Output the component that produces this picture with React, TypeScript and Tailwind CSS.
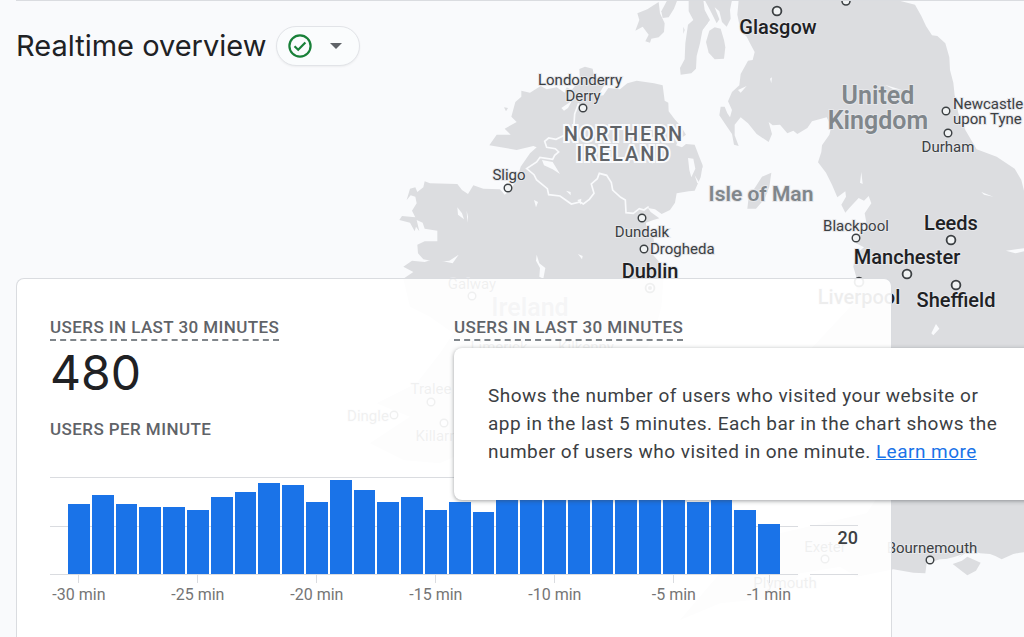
type Place = {
    name: string;
    x: number;
    y: number;
    kind: 'city' | 'town' | 'region' | 'country' | 'island';
    anchor?: 'start' | 'middle';
    pin?: [number, number];
};

const places: Place[] = [
    { name: 'Glasgow', x: 778, y: 34, kind: 'city', pin: [777, 11] },
    { name: 'Londonderry', x: 580, y: 85, kind: 'town' },
    { name: 'Derry', x: 583, y: 101, kind: 'town', pin: [583, 108] },
    { name: 'Sligo', x: 509, y: 180, kind: 'town', pin: [508, 188] },
    { name: 'Dundalk', x: 642, y: 237, kind: 'town', pin: [642, 218] },
    { name: 'Drogheda', x: 650, y: 254, kind: 'town', anchor: 'start', pin: [644, 249] },
    { name: 'Dublin', x: 650, y: 278, kind: 'city', pin: [650, 288] },
    { name: 'NORTHERN', x: 624, y: 141, kind: 'region' },
    { name: 'IRELAND', x: 624, y: 161, kind: 'region' },
    { name: 'United', x: 878, y: 104, kind: 'country' },
    { name: 'Kingdom', x: 878, y: 129, kind: 'country' },
    { name: 'Ireland', x: 530, y: 316, kind: 'country' },
    { name: 'Isle of Man', x: 761, y: 201, kind: 'island' },
    { name: 'Newcastle', x: 953, y: 109, kind: 'town', anchor: 'start', pin: [946, 111] },
    { name: 'upon Tyne', x: 953, y: 124, kind: 'town', anchor: 'start' },
    { name: 'Durham', x: 948, y: 152, kind: 'town', pin: [948, 133] },
    { name: 'Blackpool', x: 856, y: 231, kind: 'town', pin: [856, 238] },
    { name: 'Leeds', x: 951, y: 230, kind: 'city', pin: [951, 240] },
    { name: 'Manchester', x: 907, y: 264, kind: 'city', pin: [907, 274] },
    { name: 'Liverpool', x: 859, y: 304, kind: 'city', pin: [859, 282] },
    { name: 'Sheffield', x: 956, y: 307, kind: 'city', pin: [956, 285] },
    { name: 'Galway', x: 472, y: 289, kind: 'town', pin: [472, 296] },
    { name: 'Limerick', x: 499, y: 352, kind: 'town' },
    { name: 'Kilkenny', x: 586, y: 352, kind: 'town' },
    { name: 'Tralee', x: 431, y: 394, kind: 'town', pin: [431, 402] },
    { name: 'Dingle', x: 368, y: 421, kind: 'town', pin: [394, 415] },
    { name: 'Killarney', x: 444, y: 441, kind: 'town', pin: [444, 423] },
    { name: 'Exeter', x: 825, y: 552, kind: 'town', pin: [825, 559] },
    { name: 'Plymouth', x: 785, y: 588, kind: 'town' },
    { name: 'Bournemouth', x: 932, y: 553, kind: 'town', pin: [930, 560] },
];

const labelStyles = {
    city: 'fill-[#202124] text-[20px] font-medium',
    town: 'fill-[#3c4043] text-[15px]',
    region: 'fill-[#5f6368] text-[20px] font-medium tracking-widest',
    country: 'fill-[#80868b] text-[25px] font-semibold',
    island: 'fill-[#80868b] text-[21px] font-semibold',
};

// heights in px, 49px is 20 users
const bars = [
    70, 79, 70, 67, 67, 64, 77, 82, 91, 89, 72, 94, 84, 72, 77, 64, 72, 62, 80, 83, 78, 81, 85, 79, 84, 81, 72, 76,
    64, 50,
];

function Map() {
    return (
        <svg
            className="absolute inset-0 h-full w-full font-['Roboto',sans-serif]"
            viewBox="0 0 1024 637"
            preserveAspectRatio="xMinYMin slice"
            aria-label="Map of users"
        >
            <g transform="translate(390 0) scale(0.33333)" fill="#dcdde0">
                {/* Ireland */}
                <path d="M568 207L585 200L608 206L612 228L640 243L643 256L628 280L612 290L640 286L655 264L690 268L712 250L740 242L792 250L818 256L824 302L835 308L836 334L854 358L872 378L888 404L868 418L858 436L876 442L888 432L914 434L926 466L938 496L932 532L914 572L896 574L860 580L855 608L840 630L815 642L795 628L774 624L782 636L808 655L790 660L768 668L770 690L790 712L794 742L785 760L806 784L820 840L814 920L790 1010L745 1090L640 1140L500 1220L300 1320L150 1390L40 1380L-60 1330L60 1250L-40 1210L80 1150L150 1060L190 1000L120 950L60 920L40 836L70 816L40 800L66 782L104 786L130 778L188 790L206 764L178 782L140 786L100 778L84 760L82 734L104 724L142 724L142 692L104 686L98 668L80 660L88 694L78 680L74 694L60 668L28 660L36 648L76 652L66 632L80 610L76 590L62 586L50 600L60 566L76 562L82 576L100 562L104 544L120 550L202 552L216 570L234 582L250 556L280 566L330 568L344 584L358 574L380 540L392 500L420 460L440 442L430 438L380 450L298 436L320 404L362 404L344 386L380 366L364 350L376 306L394 290L394 272L420 278L452 258L470 268L500 262L524 278L530 262L545 270L570 240Z" />
                {/* Inner Hebrides and Kintyre */}
                <path d="M736 92L748 60L742 40L772 28L806 6L810 40L824 70L822 96L806 112L784 116L780 128L766 124L776 104L758 80Z" />
                <path d="M832 0H862L852 26L836 52L818 54L814 34Z" />
                <path d="M896 0H940L944 30L960 60L938 88L930 130L920 168L918 206L904 220L872 224L870 204L884 178L886 130L894 74L910 60L896 34Z" />
                <path d="M342 322L354 324L348 334ZM880 80L884 90L880 102Z" />
            </g>
            <g transform="translate(390 0) scale(0.33333)" fill="none" stroke="#f9fafc" strokeWidth="5">
                {/* Irish border */}
                <path d="M566 310L554 342L552 372L560 384L536 400L498 418L476 414L464 424L470 442L496 446L506 456L494 466L488 478L450 472L440 486L410 506L432 524L440 540L472 566L476 584L510 588L544 612L570 606L580 612L598 598L612 580L604 552L622 536L628 520L650 526L664 548L668 570L692 592L706 600L708 638L730 640L748 626L762 630L776 620" />
            </g>
            <g transform="translate(390 0) scale(0.33333)" fill="#f9fafc">
                {/* Loughs */}
                <path d="M514 324L546 302L534 324L522 332ZM456 480L488 486L510 522L488 508L462 496ZM894 474L910 476L916 506L904 532L898 510ZM914 526L928 548L922 550ZM528 572L542 576L542 586ZM562 600L574 596L572 614ZM202 622L216 640L222 658L204 644ZM230 632L234 650L232 668ZM432 600L444 606L438 622ZM564 762L578 768L576 778ZM440 764L448 790L466 804L460 836L448 830L450 804L438 782Z" />
            </g>
            <g transform="translate(700 0) scale(0.33333)" fill="#dcdde0">
                {/* Great Britain */}
                <path d="M116 0H590L645 14L664 48L678 78L696 106L712 108L736 130L748 172L750 210L760 248L764 286L775 340L796 390L830 448L890 470L944 506L964 540L972 572L1010 620V1652L960 1658L940 1662L905 1678L886 1668L870 1662L840 1660L810 1650L780 1670L760 1676L720 1678L680 1690L676 1720L640 1718L580 1708L470 1730L420 1700L300 1720L250 1790L60 1810L-60 1860L60 1720L240 1600L500 1540L560 1450L420 1420L200 1400L260 1330L360 1260L330 1050L470 900L470 835L460 800L466 764L492 742L468 730L476 702L502 684L494 640L514 610L506 588L492 602L476 594L448 624L436 638L424 614L438 590L436 574L412 592L396 554L378 518L354 487L364 456L366 436L388 404L394 380L380 352L336 364L322 384L292 402L280 392L262 400L240 374L218 376L206 366L216 402L206 426L170 402L144 370L122 352L104 374L104 406L116 438L102 434L96 402L78 376L58 346L62 320L74 320L82 340L90 352L96 330L84 304L96 276L118 256L122 222L144 182L158 180L164 156L150 130L140 110L122 92L112 44Z" />
                {/* Arran, Bute and Man */}
                <path d="M44 82L62 86L72 120L76 142L72 176L44 178L26 158L18 126L28 92Z" />
                <path d="M14 0H96L90 30L92 56L80 80L66 66L58 34L44 22L58 58L50 70L30 30ZM0 34L18 42L24 68L6 92L0 84Z" />
                <path d="M142 626L146 592L172 552L186 530L214 518L208 560L194 596L168 626ZM0 486L8 500L0 520Z" />
                {/* Isle of Wight */}
                <path d="M758 1692L786 1682L802 1670L842 1688L828 1712L802 1726L784 1712Z" />
            </g>
            <g transform="translate(700 0) scale(0.33333)" fill="#f9fafc">
                <path d="M114 270L140 258L122 278ZM210 236L216 232L214 250ZM554 254L606 270L580 268ZM484 516L488 552L480 548ZM844 576L880 590L852 584ZM918 752L980 744V752L946 760ZM708 972L718 986L700 1006L694 1000ZM676 1692L760 1672L790 1662L770 1676L720 1684Z" />
            </g>
            <circle cx="846" cy="1" r="4" className="fill-[#f1f3f4] stroke-[#3c4043]" strokeWidth="1.6" />
            {places.map((place) => (
                <g key={place.name}>
                    {place.pin && (
                        <circle
                            cx={place.pin[0]}
                            cy={place.pin[1]}
                            r={place.kind === 'city' ? 4.4 : 3.8}
                            className="fill-[#f1f3f4] stroke-[#3c4043]"
                            strokeWidth={place.kind === 'city' ? 1.8 : 1.4}
                        />
                    )}
                    <text
                        x={place.x}
                        y={place.y}
                        textAnchor={place.anchor ?? 'middle'}
                        stroke={place.kind === 'region' ? '#f9fafc' : '#e6e7ea'}
                        strokeWidth={place.kind === 'region' ? 4 : 2}
                        paintOrder="stroke"
                        className={labelStyles[place.kind]}
                    >
                        {place.name}
                    </text>
                </g>
            ))}
            <circle cx="650" cy="288" r="2" className="fill-[#3c4043]" />
        </svg>
    );
}

function MetricTitle({ children }: { children: string }) {
    return (
        <h2 className="inline-block border-b-2 border-dashed border-[#80868b] text-[17px] leading-6 font-medium tracking-wide text-[#5f6368] uppercase">
            {children}
        </h2>
    );
}

function UsersChart() {
    return (
        <div className="mt-9 flex gap-3">
            <div className="flex-1">
                <div className="relative h-[98px]">
                    <div className="absolute inset-0 flex flex-col justify-between">
                        <div className="h-px bg-[#dadce0]" />
                        <div className="h-px bg-[#dadce0]" />
                        <div className="h-px bg-[#dadce0]" />
                    </div>
                    <div className="relative flex h-[97px] items-end gap-0.5 px-[18px]">
                        {bars.map((height, i) => (
                            <div key={i} className="flex-1 bg-[#1a73e8]" style={{ height }} />
                        ))}
                    </div>
                </div>
                <div className="flex gap-0.5 px-[18px]">
                    {bars.map((_, i) => {
                        const minute = 30 - i;
                        const labelled = minute % 5 === 0 || minute === 1;
                        return (
                            <div key={i} className="flex w-0 flex-1 flex-col items-center">
                                {labelled && (
                                    <>
                                        <div className="h-2 w-px shrink-0 bg-[#dadce0]" />
                                        <span className="text-base leading-6 whitespace-nowrap text-[#757575]">
                                            -{minute} min
                                        </span>
                                    </>
                                )}
                            </div>
                        );
                    })}
                </div>
            </div>
            <div className="mt-12 h-[50px] w-12 border-y border-[#dadce0] text-right text-lg leading-6 font-medium text-[#3c4043]">
                20
            </div>
        </div>
    );
}

export default function App() {
    return (
        <main className="relative flex min-h-screen flex-col overflow-hidden bg-[#f9fafc] pl-4 font-['Roboto',sans-serif]">
            <Map />
            <header className="relative flex items-center gap-2.5 border-t border-[#dadce0] pt-[25px]">
                <h1 className="font-['Inter',sans-serif] text-[29px] leading-10 text-[#202124]">Realtime overview</h1>
                <button
                    type="button"
                    aria-label="Data quality"
                    className="flex h-10 w-[84px] items-center justify-between rounded-full border border-[#e2e4e8] bg-[#fafcfd] pr-[17px] pl-[11px] shadow-xs"
                >
                    <svg width="24" height="24" viewBox="0 0 24 24" fill="none" stroke="#188038" strokeWidth="2.2">
                        <circle cx="12" cy="12" r="10.6" />
                        <path d="M6.5 12.2L10.2 15.8L17.4 8.4" />
                    </svg>
                    <svg width="12" height="6" viewBox="0 0 12 6" fill="#5f6368">
                        <path d="M0 0H12L6 6Z" />
                    </svg>
                </button>
            </header>
            <section className="relative mt-[212px] w-full max-w-[876px] flex-1 rounded-t-lg border border-b-0 border-[#dadce0] bg-white/92 px-[33px] pt-9">
                <div className="grid grid-cols-2">
                    <div>
                        <MetricTitle>Users in last 30 minutes</MetricTitle>
                        <p className="font-['Inter',sans-serif] text-5xl leading-[64px] text-[#202124]">480</p>
                    </div>
                    <div className="relative">
                        <MetricTitle>Users in last 30 minutes</MetricTitle>
                        <div
                            role="tooltip"
                            className="absolute top-[33px] left-0 z-10 w-[592px] rounded-lg bg-white p-[34px] text-[19px] leading-7 tracking-wide text-[#3c4043] shadow-[0_1px_4px_rgba(60,64,67,0.5)]"
                        >
                            Shows the number of users who visited your website or app in the last 5 minutes. Each bar
                            in the chart shows the number of users who visited in one minute.{' '}
                            <a href="#" className="text-[#1a73e8] underline">
                                Learn more
                            </a>
                        </div>
                    </div>
                </div>
                <h3 className="mt-3 text-[17px] leading-6 font-medium tracking-wide text-[#5f6368] uppercase">
                    Users per minute
                </h3>
                <UsersChart />
            </section>
        </main>
    );
}
